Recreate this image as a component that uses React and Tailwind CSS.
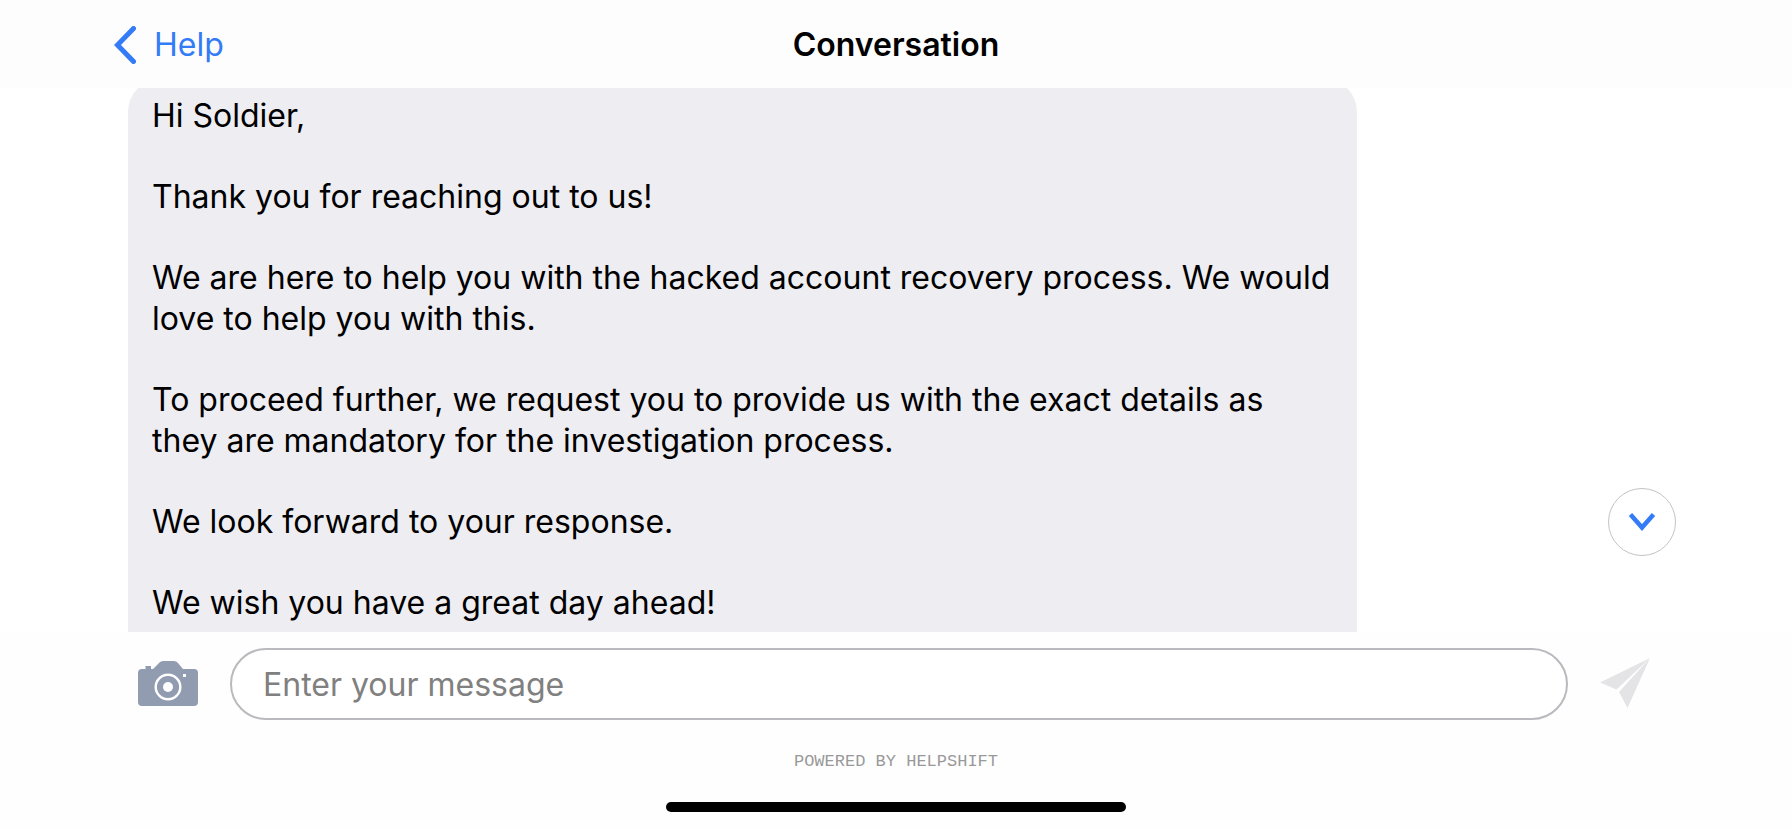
import { useState } from 'react';

const paragraphs = [
  'Hi Soldier,',
  'Thank you for reaching out to us!',
  'We are here to help you with the hacked account recovery process. We would love to help you with this.',
  'To proceed further, we request you to provide us with the exact details as they are mandatory for the investigation process.',
  'We look forward to your response.',
  'We wish you have a great day ahead!',
];

function BackIcon() {
  return (
    <svg width="22" height="38" viewBox="0 0 22 38" fill="none" stroke="currentColor" strokeWidth="5" strokeLinecap="round" strokeLinejoin="miter" aria-hidden="true">
      <path d="M19.5 2.5 3.5 19l16 16.5" />
    </svg>
  );
}

function ChevronDownIcon() {
  return (
    <svg width="28" height="20" viewBox="0 0 28 20" fill="none" stroke="currentColor" strokeWidth="4.5" aria-hidden="true">
      <path d="M2.5 2.5 14 15.5 25.5 2.5" />
    </svg>
  );
}

function CameraIcon() {
  return (
    <svg width="60" height="45" viewBox="0 0 60 45" aria-hidden="true">
      <path
        fill="currentColor"
        d="M4 8H7.500V5H13V8H15L21.500 1.500Q23 0 25 0H36Q38 0 39.500 1.500L45 8H56Q60 8 60 12V41Q60 45 56 45H4Q0 45 0 41V12Q0 8 4 8Z"
      />
      <circle cx="30" cy="26" r="12.300" fill="none" stroke="white" strokeWidth="2.400" />
      <circle cx="30" cy="26" r="5" fill="white" />
      <rect x="45" y="13" width="3" height="3" fill="white" />
    </svg>
  );
}

function SendIcon() {
  return (
    <svg width="50" height="50" viewBox="0 0 50 50" fill="currentColor" aria-hidden="true">
      <path d="M50 0 0 24.500 16.500 31.500Z" />
      <path d="M50 0 19 34 27.500 50Z" />
    </svg>
  );
}

export default function App() {
  const [message, setMessage] = useState('');

  return (
    <div className="h-screen flex flex-col bg-white text-black font-['Inter',sans-serif]">
      <header className="h-22 shrink-0 grid grid-cols-[1fr_auto_1fr] items-center bg-[#fdfdfd] px-28 pt-0.5">
        <a href="#help" className="flex items-center gap-[18px] pl-0.5 text-[32px] leading-10 text-[#347bf7]">
          <BackIcon />
          Help
        </a>
        <h1 className="text-[32px] leading-10 font-semibold">Conversation</h1>
      </header>

      <main className="relative flex-1 min-h-0 overflow-hidden px-32">
        {/* the thread is scrolled, so the bubble runs under both bars */}
        <div className="-mt-2.5 w-4/5 rounded-[34px] bg-[#eeedf2] px-6 pt-[17px] pb-10 flex flex-col gap-10 text-[32px] leading-[41px]">
          {paragraphs.map(text => <p key={text}>{text}</p>)}
        </div>
        <button
          aria-label="Scroll to latest"
          className="absolute right-29 bottom-19 w-17 h-17 rounded-full border border-[#c4c4c6] bg-white text-[#347bf7] flex items-center justify-center"
        >
          <ChevronDownIcon />
        </button>
      </main>

      <footer className="shrink-0 flex flex-col items-center pt-4 pb-4 bg-[#fefefe]">
        <form onSubmit={e => e.preventDefault()} className="w-full flex items-center gap-8 pl-[138px] pr-[142px]">
          <button type="button" aria-label="Attach a photo" className="text-[#929cb0] pb-0.5">
            <CameraIcon />
          </button>
          <input
            type="text"
            aria-label="Enter your message"
            placeholder="Enter your message"
            value={message}
            onChange={e => setMessage(e.target.value)}
            className="flex-1 min-w-0 h-18 rounded-full border-2 border-[#b9b9be] bg-white px-[31px] text-[32px] placeholder:text-[#808080] outline-none"
          />
          <button type="submit" aria-label="Send" disabled={!message} className="text-[#e4e4e6] pb-0.5">
            <SendIcon />
          </button>
        </form>
        <p className="mt-8 text-[17px] leading-5 text-[#999999] font-['Liberation_Mono',monospace]">POWERED BY HELPSHIFT</p>
        <div className="mt-[30px] w-[460px] h-2.5 rounded-full bg-black" />
      </footer>
    </div>
  );
}
